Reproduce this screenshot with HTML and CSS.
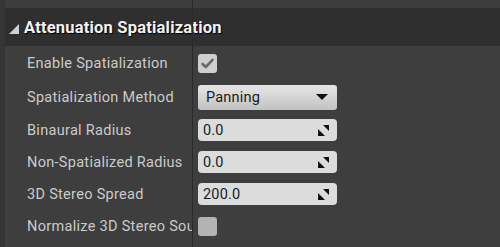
FILE: index.html
```html
<!DOCTYPE html>
<html>
<head>
<meta charset="utf-8">
<link rel="stylesheet" href="styles.css">
</head>
<body>
<div class="panel">
  <div class="gutter"></div>
  <div class="content">
    <div class="topband"></div>
    <div class="header">
      <svg class="caret" width="10" height="10" viewBox="0 0 10 10"><polygon points="10,0 10,10 0,10" fill="#d0d0d0"/></svg>
      <span class="title">Attenuation Spatialization</span>
    </div>
    <div class="row tall">
      <div class="label">Enable Spatialization</div>
      <div class="value">
        <div class="check on">
          <svg width="13" height="11" viewBox="0 0 13 11"><path d="M1.5 6 L4.8 9 L11.5 1.8" fill="none" stroke="#6a6a6a" stroke-width="2.6" stroke-linecap="round" stroke-linejoin="round"/></svg>
        </div>
      </div>
    </div>
    <div class="row tall">
      <div class="label">Spatialization Method</div>
      <div class="value">
        <div class="combo"><span>Panning</span>
          <svg width="12" height="6" viewBox="0 0 12 6"><polygon points="0,0 12,0 6,6" fill="#111"/></svg>
        </div>
      </div>
    </div>
    <div class="row">
      <div class="label">Binaural Radius</div>
      <div class="value">
        <div class="num"><span>0.0</span>
          <svg width="11" height="11" viewBox="0 0 11 11"><polygon points="5,0 11,0 11,6" fill="#111"/><polygon points="0,4 0,11 7,11" fill="#111"/></svg>
        </div>
      </div>
    </div>
    <div class="row">
      <div class="label">Non-Spatialized Radius</div>
      <div class="value">
        <div class="num"><span>0.0</span>
          <svg width="11" height="11" viewBox="0 0 11 11"><polygon points="5,0 11,0 11,6" fill="#111"/><polygon points="0,4 0,11 7,11" fill="#111"/></svg>
        </div>
      </div>
    </div>
    <div class="row">
      <div class="label">3D Stereo Spread</div>
      <div class="value">
        <div class="num"><span>200.0</span>
          <svg width="11" height="11" viewBox="0 0 11 11"><polygon points="5,0 11,0 11,6" fill="#111"/><polygon points="0,4 0,11 7,11" fill="#111"/></svg>
        </div>
      </div>
    </div>
    <div class="row">
      <div class="label">Normalize 3D Stereo Sounds</div>
      <div class="value">
        <div class="check off"></div>
      </div>
    </div>
  </div>
</div>
</body>
</html>
```
FILE: styles.css
```css
* { box-sizing: border-box; }
html, body { margin: 0; padding: 0; }
body {
  width: 500px;
  height: 247px;
  overflow: hidden;
  background: #3e3e3e;
  font-family: Roboto, "Liberation Sans", sans-serif;
}
.panel {
  display: flex;
  height: 247px;
}
.gutter {
  width: 5px;
  background: #353535;
  flex: none;
}
.content {
  flex: 1;
  position: relative;
}
.content::after {
  content: "";
  position: absolute;
  left: 187px;
  top: 0;
  bottom: 0;
  width: 1px;
  background: #2a2a2a;
}
.topband {
  height: 8px;
  background: #3d3d3d;
}
.header {
  height: 38px;
  background: #2f2f2f;
  display: flex;
  align-items: center;
  padding-left: 4px;
  gap: 5px;
}
.caret { margin-top: 3px; }
.title {
  color: #f2f2f2;
  font-weight: bold;
  font-size: 16.5px;
  text-shadow: 1px 1px 1px #000;
  letter-spacing: 0.2px;
}
.row {
  display: flex;
  align-items: center;
  height: 32px;
}
.row.tall { height: 34px; }
.label {
  width: 187px;
  flex: none;
  padding-left: 22px;
  color: #cbcbcb;
  font-size: 14.5px;
  letter-spacing: 0.3px;
  white-space: nowrap;
  overflow: hidden;
}
.value {
  padding-left: 6px;
  display: flex;
  align-items: center;
}
.check {
  width: 19px;
  height: 19px;
  border-radius: 3px;
  display: flex;
  align-items: center;
  justify-content: center;
}
.check.on { background: #cfcfcf; }
.check.off { background: #b3b3b3; }
.combo {
  width: 139px;
  height: 25px;
  border-radius: 3px;
  background: linear-gradient(#e6e6e6, #c2c2c2);
  display: flex;
  align-items: center;
  justify-content: space-between;
  padding: 0 9px 0 8px;
  color: #1a1a1a;
  font-size: 14.5px;
  letter-spacing: 0.2px;
}
.num {
  width: 139px;
  height: 22px;
  border-radius: 4px;
  background: #dcdcdc;
  display: flex;
  align-items: center;
  justify-content: space-between;
  padding: 0 8px 0 5px;
  color: #1a1a1a;
  font-size: 14.5px;
  letter-spacing: 0.2px;
}
```
